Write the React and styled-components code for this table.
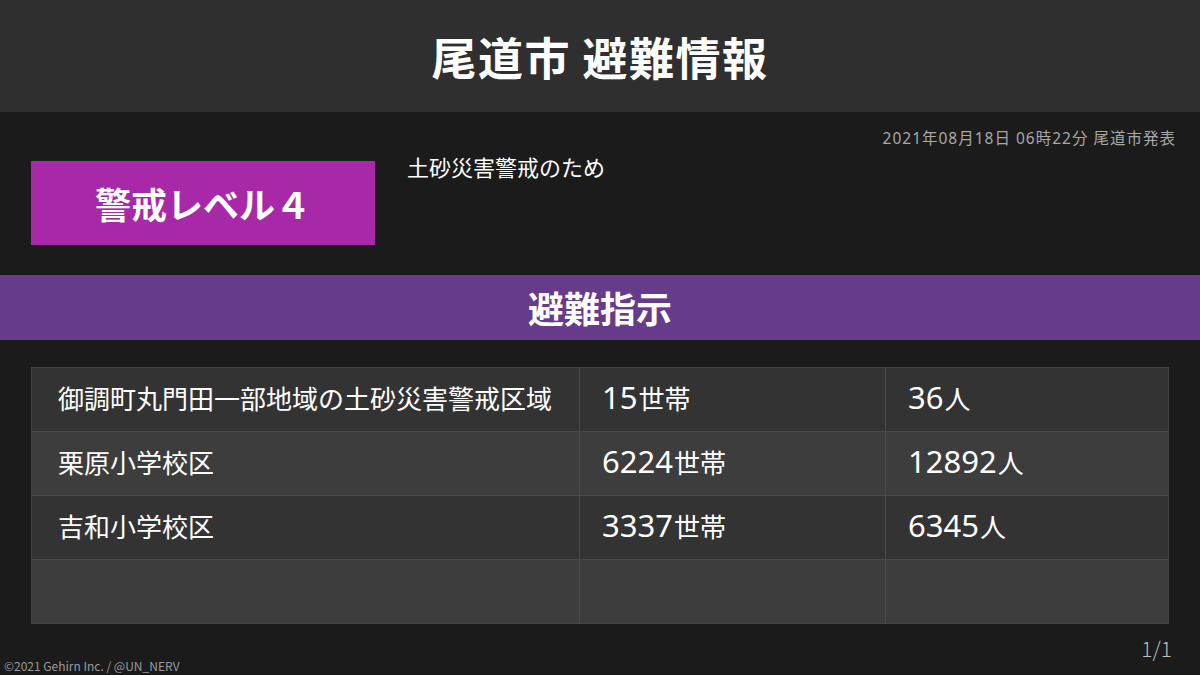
import React from "react";
import styled, { createGlobalStyle } from "styled-components";

const GlobalStyle = createGlobalStyle`
  html, body {
    margin: 0;
    padding: 0;
    background: #1b1b1b;
  }
  body {
    font-family: "Noto Sans CJK JP", "Noto Sans", sans-serif;
    color: #fff;
  }
`;

const rows = [
  { area: "御調町丸門田一部地域の土砂災害警戒区域", households: 15, people: 36 },
  { area: "栗原小学校区", households: 6224, people: 12892 },
  { area: "吉和小学校区", households: 3337, people: 6345 },
  { area: "", households: null, people: null },
];

const Count = ({ value, unit }) =>
  value == null ? null : (
    <>
      <Num>{value}</Num>
      {unit}
    </>
  );

const App = () => {
  return (
    <>
      <GlobalStyle />
      <Page>
        <Header>尾道市 避難情報</Header>
        <Info>
          <Issued>2021年08月18日 06時22分 尾道市発表</Issued>
          <InfoRow>
            <Level>警戒レベル４</Level>
            <Reason>土砂災害警戒のため</Reason>
          </InfoRow>
        </Info>
        <Band>避難指示</Band>
        <Table>
          {rows.map((r, i) => (
            <Row key={i} $alt={i % 2 === 1}>
              <Cell>{r.area}</Cell>
              <Cell>
                <Count value={r.households} unit="世帯" />
              </Cell>
              <Cell>
                <Count value={r.people} unit="人" />
              </Cell>
            </Row>
          ))}
        </Table>
        <Footer>
          <Copy>©2021 Gehirn Inc. / @UN_NERV</Copy>
          <PageNum>1/1</PageNum>
        </Footer>
      </Page>
    </>
  );
};

export default App;

const Page = styled.div`
  width: 1200px;
  height: 675px;
  background: #1b1b1b;
  display: flex;
  flex-direction: column;
  overflow: hidden;
`;

const Header = styled.div`
  height: 112px;
  background: #2f2f2f;
  display: flex;
  align-items: center;
  justify-content: center;
  font-size: 45px;
  font-weight: 700;
  letter-spacing: 1.5px;
`;

const Info = styled.div`
  height: 163px;
  display: flex;
  flex-direction: column;
  padding: 0 25px 0 31px;
`;

const Issued = styled.div`
  align-self: flex-end;
  margin-top: 15px;
  font-family: "Noto Sans", "Noto Sans CJK JP", sans-serif;
  font-size: 15.5px;
  letter-spacing: 1px;
  margin-right: -1px;
  color: #a8a8a8;
  line-height: 22px;
`;

const InfoRow = styled.div`
  display: flex;
  align-items: flex-start;
  gap: 32px;
  margin-top: 12px;
`;

const Level = styled.div`
  width: 344px;
  height: 84px;
  background: #a829a8;
  display: flex;
  align-items: center;
  justify-content: center;
  font-size: 36px;
  font-weight: 700;
`;

const Reason = styled.div`
  font-size: 22px;
  line-height: 22px;
  margin-top: -6px;
`;

const Band = styled.div`
  height: 65px;
  background: #673b8c;
  display: flex;
  align-items: center;
  justify-content: center;
  font-size: 36px;
  font-weight: 700;
  padding-bottom: 2px;
  box-sizing: border-box;
`;

const Table = styled.div`
  margin: 27px 31px 0 31px;
  border: 1px solid #444;
  display: flex;
  flex-direction: column;
`;

const Row = styled.div`
  display: grid;
  grid-template-columns: 547px 306px 1fr;
  height: 63px;
  background: ${(p) => (p.$alt ? "#3d3d3d" : "#333333")};
  & + & {
    border-top: 1px solid #4a4a4a;
  }
`;

const Cell = styled.div`
  display: flex;
  align-items: baseline;
  align-content: center;
  flex-wrap: wrap;
  padding-left: 26px;
  font-size: 26px;
  padding-bottom: 4px;
  & + & {
    border-left: 1px solid #4a4a4a;
    padding-left: 22px;
  }
`;

const Num = styled.span`
  font-family: "Noto Sans", sans-serif;
  font-size: 31px;
  line-height: 1;
  margin-right: 1px;
`;

const Footer = styled.div`
  flex: 1;
  display: flex;
  justify-content: space-between;
  align-items: flex-end;
  padding: 0 28px 2px 4px;
`;

const Copy = styled.div`
  font-size: 12px;
  color: #9a9a9a;
  line-height: 14px;
`;

const PageNum = styled.div`
  font-size: 21px;
  font-weight: 300;
  color: #bdbdbd;
  margin-bottom: 10px;
`;
